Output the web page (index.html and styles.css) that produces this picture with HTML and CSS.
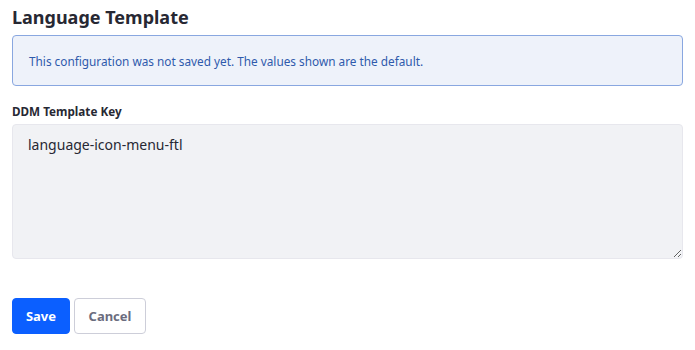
FILE: index.html
```html
<!DOCTYPE html>
<html>
<head>
<meta charset="utf-8">
<link rel="stylesheet" href="styles.css">
</head>
<body>
<div class="page">
  <h2 class="title">Language Template</h2>
  <div class="alert">This configuration was not saved yet. The values shown are the default.</div>
  <div class="field">
    <label class="label">DDM Template Key</label>
    <textarea class="textarea">language-icon-menu-ftl</textarea>
  </div>
  <div class="actions">
    <button class="btn btn-primary">Save</button>
    <button class="btn btn-secondary">Cancel</button>
  </div>
</div>
</body>
</html>
```
FILE: styles.css
```css
html, body { margin: 0; padding: 0; background: #fff; }
body { font-family: "Noto Sans", "Open Sans", sans-serif; color: #272833; }
.page { padding: 0 12px; }
.title { margin: 0; padding-top: 5px; font-size: 18px; font-weight: 700; line-height: 25px; color: #272833; }
.alert {
  margin-top: 5px;
  height: 51px;
  box-sizing: border-box;
  border: 1px solid #89a7e0;
  border-radius: 4px;
  background: #eef2fa;
  color: #2e5aac;
  font-size: 11.8px;
  padding: 0 16px;
  display: flex;
  align-items: center;
}
.field { margin-top: 17px; display: flex; flex-direction: column; }
.label { font-size: 11.7px; font-weight: 700; line-height: 16px; color: #272833; }
.textarea {
  margin-top: 5px;
  height: 135px;
  box-sizing: border-box;
  border: 1px solid #e7e7ed;
  border-radius: 4px;
  background: #f1f2f5;
  color: #272833;
  font-family: "Noto Sans", "Open Sans", sans-serif;
  font-size: 14px;
  line-height: 20px;
  padding: 10px 15px;
  resize: vertical;
  outline: none;
}
.actions { margin-top: 39px; display: flex; gap: 4px; }
.btn {
  height: 36px;
  box-sizing: border-box;
  border-radius: 4px;
  font-family: "Noto Sans", "Open Sans", sans-serif;
  font-size: 13px;
  font-weight: 700;
  padding: 0 12px;
  cursor: pointer;
}
.btn-primary { background: #0b5fff; border: 1px solid #0b5fff; color: #fff; width: 58px; }
.btn-secondary { background: #fff; border: 1px solid #cdced9; color: #6b6c7e; width: 72px; }
```
